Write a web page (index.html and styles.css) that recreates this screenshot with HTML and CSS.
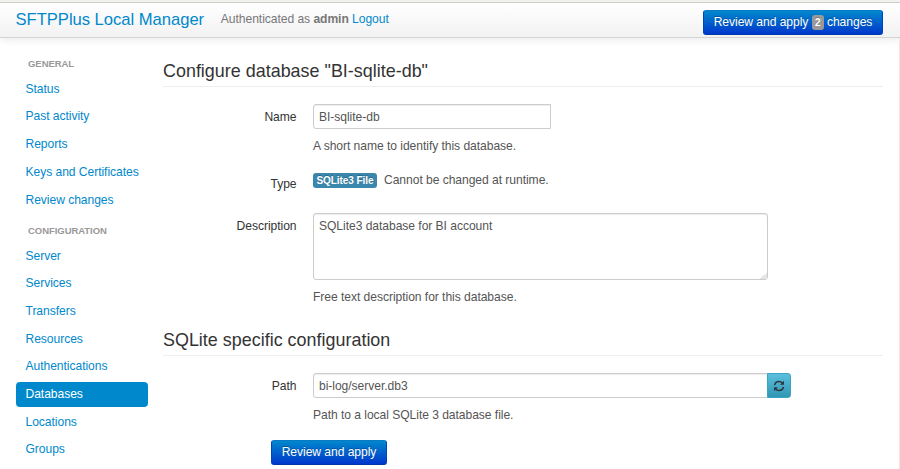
FILE: index.html
```html
<!DOCTYPE html>
<html lang="en">
<head>
<meta charset="utf-8">
<title>SFTPPlus Local Manager</title>
<link rel="stylesheet" href="styles.css">
</head>
<body>
<header class="navbar">
  <a class="brand">SFTPPlus Local Manager</a>
  <p class="auth">Authenticated as <b>admin</b> <a>Logout</a></p>
  <button class="btn btn-top">Review and apply <span class="count">2</span> changes</button>
</header>
<div class="layout">
  <nav class="sidebar">
    <h6>General</h6>
    <a>Status</a>
    <a>Past activity</a>
    <a>Reports</a>
    <a>Keys and Certificates</a>
    <a>Review changes</a>
    <h6 class="second">Configuration</h6>
    <a>Server</a>
    <a>Services</a>
    <a>Transfers</a>
    <a>Resources</a>
    <a>Authentications</a>
    <a class="active">Databases</a>
    <a>Locations</a>
    <a>Groups</a>
  </nav>
  <main class="content">
    <h2>Configure database "BI-sqlite-db"</h2>
    <div class="row row-name">
      <label>Name</label>
      <div class="field">
        <input class="name" type="text" value="BI-sqlite-db">
        <p class="help">A short name to identify this database.</p>
      </div>
    </div>
    <div class="row row-type">
      <label>Type</label>
      <div class="field type"><span class="tag">SQLite3 File</span><span class="note">Cannot be changed at runtime.</span></div>
    </div>
    <div class="row row-desc">
      <label>Description</label>
      <div class="field">
        <div class="area-wrap">
          <textarea>SQLite3 database for BI account</textarea>
          <i class="grip"></i>
        </div>
        <p class="help">Free text description for this database.</p>
      </div>
    </div>
    <h2 class="section">SQLite specific configuration</h2>
    <div class="row row-path">
      <label>Path</label>
      <div class="field">
        <div class="group">
          <input class="path" type="text" value="bi-log/server.db3">
          <button class="refresh" aria-label="Refresh">
            <svg viewBox="0 0 12 12" width="12" height="12"><path d="M1.6 5.2C2 2.9 3.9 1.5 6 1.5c1.4 0 2.6.6 3.4 1.5M10.4 6.8C10 9.1 8.1 10.5 6 10.5c-1.4 0-2.6-.6-3.4-1.5" fill="none" stroke="#2d383c" stroke-width="1.6"/><path d="M11 .8v4H7zM1 11.2v-4h4z" fill="#2d383c"/></svg>
          </button>
        </div>
        <p class="help">Path to a local SQLite 3 database file.</p>
      </div>
    </div>
    <button class="btn btn-submit">Review and apply</button>
  </main>
</div>
</body>
</html>
```
FILE: styles.css
```css
* { box-sizing: border-box; }
body {
  margin: 0;
  height: 469px;
  overflow: hidden;
  border-top: 2px solid #f2f1f0;
  background: #fff;
  color: #333;
  font: 12.1px/17px "Liberation Sans", Arial, sans-serif;
  letter-spacing: -0.05px;
}
h2, h6, p { margin: 0; }
a { color: #0088cc; text-decoration: none; }
button, input, textarea { font: inherit; letter-spacing: inherit; margin: 0; }
.navbar {
  display: flex;
  align-items: flex-start;
  height: 36px;
  padding: 0 17px 0 15.5px;
  border-top: 1px solid #cfcdca;
  border-bottom: 1px solid #d4d4d4;
  background: linear-gradient(#fff, #f2f2f2);
  box-shadow: 0 1px 9px rgba(0, 0, 0, .1);
}
.brand {
  width: 189px;
  margin-top: 7px;
  font-size: 16.6px;
  line-height: 20px;
  letter-spacing: -0.02px;
  white-space: nowrap;
}
.auth { margin: 8px 0 0 16.3px; color: #777; }
.btn {
  height: 25px;
  padding: 0;
  border: 1px solid #0055c0;
  border-color: #0a7ac6 #0044bd #0038a8;
  border-radius: 3px;
  background: linear-gradient(#0088cc, #0037cc);
  color: #fff;
  text-shadow: 0 -1px 0 rgba(0, 0, 0, .25);
  white-space: nowrap;
}
.btn-top { width: 180px; margin: 7px 0 0 auto; }
.count {
  display: inline-block;
  width: 12px;
  height: 15px;
  border-radius: 3px;
  background: #999;
  font-size: 10px;
  font-weight: bold;
  line-height: 15px;
}
.layout { display: flex; height: 431px; border-right: 1px solid #f7e4dc; }
.sidebar { width: 147.5px; padding: 18px 0 0 15.5px; }
.sidebar h6 {
  height: 15px;
  padding-left: 12.5px;
  color: #999;
  font-size: 9.5px;
  line-height: 15px;
  text-transform: uppercase;
}
.sidebar h6 + a { margin-top: 5.8px; }
.sidebar .second { margin-top: 10.3px; }
.sidebar a {
  display: block;
  height: 25px;
  margin-bottom: 2.7px;
  padding-left: 10px;
  border-radius: 4px;
  line-height: 25px;
}
.sidebar .active { background: #0088cc; color: #fff; }
.content { width: 720px; margin-left: 15.5px; padding-top: 22px; }
h2 {
  height: 27px;
  padding-top: 1px;
  border-bottom: 1px solid #eee;
  font-size: 17.9px;
  font-weight: normal;
  letter-spacing: 0.02px;
  line-height: 21px;
}
.row { display: flex; }
.row label { width: 133.5px; padding-top: 4px; text-align: right; }
.row-name label, .row-desc label, .row-path label { padding-top: 4.5px; }
.field { margin-left: 16.5px; color: #555; }
.row-name { margin-top: 17px; }
input {
  display: block;
  height: 25px;
  padding: 0 5px;
  border: 1px solid #ccc;
  border-radius: 3px;
  background: #fff;
  color: #555;
  box-shadow: inset 0 1px 1px rgba(0, 0, 0, .075);
}
.name { width: 238px; border-radius: 3px 0 0 3px; }
.help { margin-top: 9px; }
.row-type { margin-top: 17px; }
.type { display: flex; height: 17px; margin-top: 0; }
.tag {
  width: 64px;
  height: 15px;
  margin-top: 1px;
  border-radius: 3px;
  background: #3a87ad;
  color: #fff;
  font-size: 10px;
  font-weight: bold;
  line-height: 15px;
  text-align: center;
  text-shadow: 0 -1px 0 rgba(0, 0, 0, .25);
}
.note { margin-left: 7px; }
.row-desc { margin-top: 20px; }
.area-wrap { position: relative; width: 455px; height: 67px; }
textarea {
  display: block;
  width: 455px;
  height: 67px;
  padding: 4px 5px;
  resize: none;
  border: 1px solid #ccc;
  border-radius: 3px;
  color: #555;
  box-shadow: inset 0 1px 1px rgba(0, 0, 0, .075);
}
.grip {
  position: absolute;
  right: 1px;
  bottom: 1px;
  width: 7px;
  height: 7px;
  background: linear-gradient(135deg, transparent 50%, #e6e6e6 50%);
}
.section { margin-top: 23px; }
.row-path { margin-top: 17px; }
.group { display: flex; }
.path { width: 455px; border-radius: 3px 0 0 3px; }
.refresh {
  display: flex;
  align-items: center;
  justify-content: center;
  width: 24px;
  height: 25px;
  margin-left: -1px;
  padding: 0;
  border: 1px solid #3aa4c4;
  border-radius: 0 3px 3px 0;
  background: linear-gradient(#5bc0de, #2f96b4);
}
.btn-submit { display: block; width: 116px; margin: 16px 0 0 108px; }
```
